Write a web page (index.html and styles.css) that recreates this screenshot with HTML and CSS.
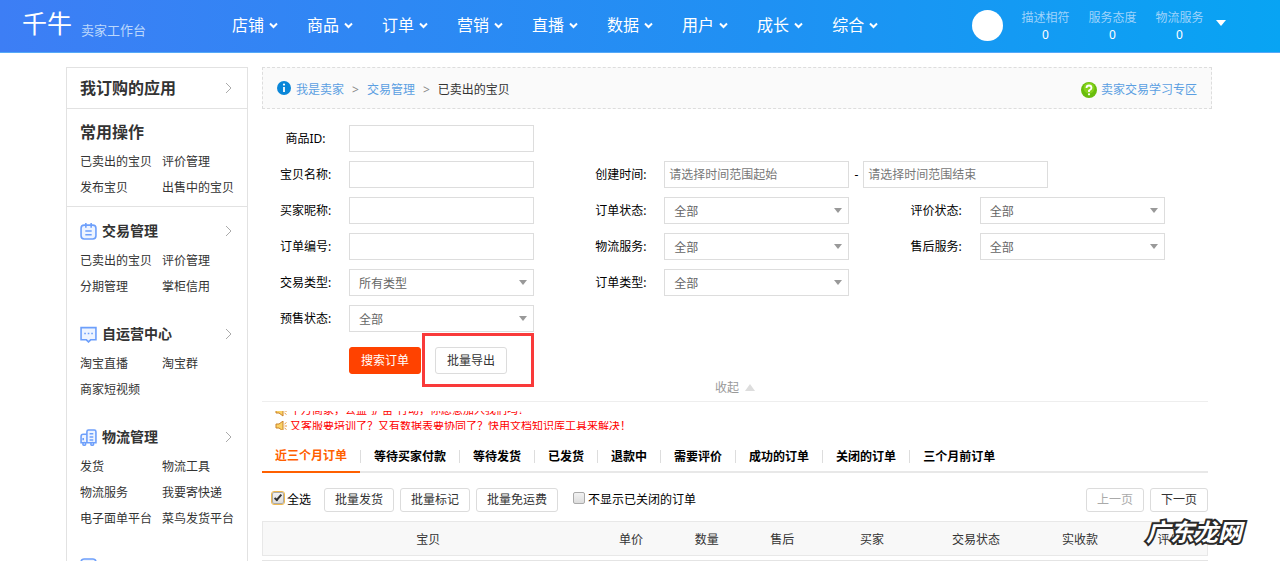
FILE: index.html
```html
<!DOCTYPE html>
<html lang="zh-CN">
<head>
  <meta charset="UTF-8">
  <title>已卖出的宝贝</title>
  <link rel="stylesheet" href="styles.css">
</head>
<body>
  <header class="header">
    <div class="logo">
      <span class="logo-name">千牛</span>
      <span class="logo-sub">卖家工作台</span>
    </div>
    <nav class="nav">
      <a href="#">店铺<svg class="chevron" viewBox="0 0 9 7"><path d="M1 1.500l3.500 3.500L8 1.500"/></svg></a>
      <a href="#">商品<svg class="chevron" viewBox="0 0 9 7"><path d="M1 1.500l3.500 3.500L8 1.500"/></svg></a>
      <a href="#">订单<svg class="chevron" viewBox="0 0 9 7"><path d="M1 1.500l3.500 3.500L8 1.500"/></svg></a>
      <a href="#">营销<svg class="chevron" viewBox="0 0 9 7"><path d="M1 1.500l3.500 3.500L8 1.500"/></svg></a>
      <a href="#">直播<svg class="chevron" viewBox="0 0 9 7"><path d="M1 1.500l3.500 3.500L8 1.500"/></svg></a>
      <a href="#">数据<svg class="chevron" viewBox="0 0 9 7"><path d="M1 1.500l3.500 3.500L8 1.500"/></svg></a>
      <a href="#">用户<svg class="chevron" viewBox="0 0 9 7"><path d="M1 1.500l3.500 3.500L8 1.500"/></svg></a>
      <a href="#">成长<svg class="chevron" viewBox="0 0 9 7"><path d="M1 1.500l3.500 3.500L8 1.500"/></svg></a>
      <a href="#">综合<svg class="chevron" viewBox="0 0 9 7"><path d="M1 1.500l3.500 3.500L8 1.500"/></svg></a>
    </nav>
    <div class="account">
      <span class="avatar"></span>
      <dl class="scores">
        <div><dt>描述相符</dt><dd>0</dd></div>
        <div><dt>服务态度</dt><dd>0</dd></div>
        <div><dt>物流服务</dt><dd>0</dd></div>
      </dl>
      <span class="account-arrow"></span>
    </div>
  </header>

  <div class="page">
    <aside class="sidebar">
      <a class="side-apps" href="#">我订购的应用<svg class="arrow" viewBox="0 0 7 12"><path d="M1 1l5 5-5 5"/></svg></a>
      <section class="side-common">
        <h2 class="side-title">常用操作</h2>
        <div class="side-links">
          <a href="#">已卖出的宝贝</a><a href="#">评价管理</a>
          <a href="#">发布宝贝</a><a href="#">出售中的宝贝</a>
        </div>
      </section>
      <div class="side-modules">
        <section class="module">
          <h3 class="module-title">
            <svg class="module-icon" viewBox="0 0 16 16"><rect x="1" y="2" width="14" height="13" rx="3"/><path d="M5.500 0v4.500M10.500 0v4.500M5 7.500h6M5 11h6"/></svg>
            交易管理<svg class="arrow" viewBox="0 0 7 12"><path d="M1 1l5 5-5 5"/></svg>
          </h3>
          <div class="side-links">
            <a href="#">已卖出的宝贝</a><a href="#">评价管理</a>
            <a href="#">分期管理</a><a href="#">掌柜信用</a>
          </div>
        </section>
        <section class="module">
          <h3 class="module-title">
            <svg class="module-icon" viewBox="0 0 16 16"><path d="M1 1.500h14v11.500H10l-2 2-2-2H1z"/><path d="M4 7h1.500M7.300 7h1.500M10.600 7h1.500"/></svg>
            自运营中心<svg class="arrow" viewBox="0 0 7 12"><path d="M1 1l5 5-5 5"/></svg>
          </h3>
          <div class="side-links">
            <a href="#">淘宝直播</a><a href="#">淘宝群</a>
            <a href="#">商家短视频</a>
          </div>
        </section>
        <section class="module">
          <h3 class="module-title">
            <svg class="module-icon" viewBox="0 0 16 16"><path d="M6.500 13V2.500q0-1.500 1.500-1.500h5.500q1.500 0 1.500 1.500V13H6.500zM6.500 5H3Q1 5 1 7v6h5.500M9 4.500h3.500M9 7.500h3.500M9 10.300h3.500M3 8.500v2"/><circle cx="4" cy="14" r="1.300"/><circle cx="11.500" cy="14" r="1.300"/></svg>
            物流管理<svg class="arrow" viewBox="0 0 7 12"><path d="M1 1l5 5-5 5"/></svg>
          </h3>
          <div class="side-links">
            <a href="#">发货</a><a href="#">物流工具</a>
            <a href="#">物流服务</a><a href="#">我要寄快递</a>
            <a href="#">电子面单平台</a><a href="#">菜鸟发货平台</a>
          </div>
        </section>
        <section class="module">
          <h3 class="module-title">
            <svg class="module-icon" viewBox="0 0 16 16"><rect x="1" y="1" width="14" height="13" rx="3"/></svg>
          </h3>
        </section>
      </div>
    </aside>

    <main class="main">
      <div class="crumb">
        <svg class="crumb-info" viewBox="0 0 14 14"><circle cx="7" cy="7" r="7" fill="#0a86d8"/><circle cx="7" cy="3.600" r="1.100" fill="#fff"/><path d="M7 6v5" stroke="#fff" stroke-width="1.800"/></svg>
        <a href="#">我是卖家</a>
        <span class="crumb-sep">&gt;</span>
        <a href="#">交易管理</a>
        <span class="crumb-sep">&gt;</span>
        <span>已卖出的宝贝</span>
        <a class="crumb-help" href="#"><svg class="crumb-question" viewBox="0 0 16 16"><circle cx="8" cy="8" r="8" fill="#69bd0c"/><circle cx="8" cy="6" r="5.500" fill="#86d21c"/><path d="M5.500 6Q5.500 3.500 8 3.500T10.500 6Q10.500 7.300 8 8.500V10" fill="none" stroke="#fff" stroke-width="1.800"/><circle cx="8" cy="12.300" r="1.100" fill="#fff"/></svg>卖家交易学习专区</a>
      </div>

      <form class="search">
        <div class="fields">
          <div class="field first"><label for="itemId">商品ID:</label><input type="text" id="itemId"></div>

          <div class="field first"><label for="itemName">宝贝名称:</label><input type="text" id="itemName"></div>
          <div class="field range">
            <label for="dateFrom">创建时间:</label><input type="text" id="dateFrom" placeholder="请选择时间范围起始">
            <span class="dash">-</span><input type="text" id="dateTo" aria-label="结束时间" placeholder="请选择时间范围结束">
          </div>

          <div class="field first"><label for="buyer">买家昵称:</label><input type="text" id="buyer"></div>
          <div class="field"><label for="orderStatus">订单状态:</label><span class="select"><select id="orderStatus"><option>全部</option></select></span></div>
          <div class="field"><label for="rateStatus">评价状态:</label><span class="select"><select id="rateStatus"><option>全部</option></select></span></div>

          <div class="field first"><label for="orderNo">订单编号:</label><input type="text" id="orderNo"></div>
          <div class="field"><label for="logistics">物流服务:</label><span class="select"><select id="logistics"><option>全部</option></select></span></div>
          <div class="field"><label for="afterSale">售后服务:</label><span class="select"><select id="afterSale"><option>全部</option></select></span></div>

          <div class="field first"><label for="tradeType">交易类型:</label><span class="select"><select id="tradeType"><option>所有类型</option></select></span></div>
          <div class="field"><label for="orderType">订单类型:</label><span class="select"><select id="orderType"><option>全部</option></select></span></div>

          <div class="field first"><label for="presale">预售状态:</label><span class="select"><select id="presale"><option>全部</option></select></span></div>
        </div>
        <div class="actions">
          <button type="button" class="btn-search">搜索订单</button>
          <span class="export"><button type="button" class="btn-export">批量导出</button></span>
        </div>
        <a class="collapse" href="#">收起<span class="collapse-arrow"></span></a>
      </form>

      <div class="notices">
        <p class="notice notice-top"><svg class="horn" viewBox="0 0 12 12"><path d="M1 4h3l4-3v10L4 8H1z" fill="#fbd265" stroke="#c9822b"/><path d="M9.500 4l2-1.500M9.500 6H12M9.500 8l2 1.500" stroke="#e79a3c"/></svg>千万商家，公益“护苗”行动，你愿意加入我们吗？</p>
        <p class="notice notice-bottom"><svg class="horn" viewBox="0 0 12 12"><path d="M1 4h3l4-3v10L4 8H1z" fill="#fbd265" stroke="#c9822b"/><path d="M9.500 4l2-1.500M9.500 6H12M9.500 8l2 1.500" stroke="#e79a3c"/></svg>又客服要培训了？又有数据表要协同了？快用文档知识库工具来解决！</p>
      </div>

      <nav class="tabs">
        <a class="active" href="#">近三个月订单</a>
        <a href="#">等待买家付款</a>
        <a href="#">等待发货</a>
        <a href="#">已发货</a>
        <a href="#">退款中</a>
        <a href="#">需要评价</a>
        <a href="#">成功的订单</a>
        <a href="#">关闭的订单</a>
        <a href="#">三个月前订单</a>
      </nav>

      <div class="toolbar">
        <label class="check check-all"><input type="checkbox" checked>全选</label>
        <button type="button">批量发货</button>
        <button type="button">批量标记</button>
        <button type="button">批量免运费</button>
        <label class="check check-closed"><input type="checkbox">不显示已关闭的订单</label>
        <div class="pager">
          <button type="button" disabled>上一页</button>
          <button type="button">下一页</button>
        </div>
      </div>

      <table class="orders">
        <colgroup>
          <col class="col-item"><col class="col-s"><col class="col-s"><col class="col-s">
          <col class="col-m"><col class="col-m"><col class="col-m"><col class="col-s">
        </colgroup>
        <thead>
          <tr>
            <th>宝贝</th>
            <th>单价</th>
            <th>数量</th>
            <th>售后</th>
            <th>买家</th>
            <th>交易状态</th>
            <th>实收款</th>
            <th>评价</th>
          </tr>
        </thead>
      </table>
      <div class="order-list"></div>
    </main>
  </div>

  <div class="watermark">广东龙网</div>
</body>
</html>
```
FILE: styles.css
```css
* {
  box-sizing: border-box;
}
body {
  position: relative;
  display: flex;
  flex-direction: column;
  height: 100vh;
  margin: 0;
  overflow: hidden;
  font-family: "Noto Sans", "Noto Sans CJK SC", sans-serif;
  font-size: 12px;
  line-height: 16px;
  color: #333;
  background: #fff;
}
a {
  color: inherit;
  text-decoration: none;
}
h2, h3, p, dl, dd {
  margin: 0;
}
button, input, select {
  font: inherit;
}
svg {
  flex: none;
}

/* header */
.header {
  display: flex;
  flex: none;
  align-items: center;
  height: 53px;
  padding: 0 54px 2px 22px;
  color: #fff;
  background: linear-gradient(90deg, #3d7ef5, #1f91f3 60%, #08a4f3);
  border-bottom: 1px solid #55a9f8;
}
.logo {
  display: flex;
  align-items: flex-end;
  gap: 9px;
  width: 210px;
  padding-bottom: 4px;
}
.logo-name {
  font-size: 25px;
  line-height: 32px;
}
.logo-sub {
  font-size: 13px;
  line-height: 18px;
  color: #bcd8fc;
}
.nav {
  display: flex;
  gap: 29px;
  font-size: 16px;
  line-height: 24px;
}
.nav a {
  display: flex;
  align-items: center;
  gap: 5px;
}
.chevron {
  width: 9px;
  height: 7px;
  fill: none;
  stroke: #fff;
  stroke-width: 2;
}
.account {
  display: flex;
  align-items: center;
  margin-left: auto;
}
.avatar {
  width: 31px;
  height: 31px;
  margin-right: 9px;
  border-radius: 50%;
  background: #fff;
}
.scores {
  display: flex;
  padding-top: 2px;
  line-height: 17px;
  text-align: center;
}
.scores div {
  width: 67px;
}
.scores dt {
  color: #9fd3fb;
}
.account-arrow {
  margin: 0 0 4px 3px;
  border: 5px solid transparent;
  border-top: 6px solid #fff;
  border-bottom: 0;
}

/* columns */
.page {
  display: flex;
  flex: 1;
  gap: 14px;
  min-height: 0;
  padding: 14px 68px 0 66px;
}

/* sidebar */
.sidebar {
  flex: none;
  width: 182px;
  border: 1px solid #e2e2e2;
  border-bottom: 0;
  overflow: hidden;
}
.arrow {
  width: 7px;
  height: 12px;
  margin-left: auto;
  fill: none;
  stroke: #aaa;
}
.side-apps {
  display: flex;
  align-items: center;
  height: 41px;
  padding: 0 15px 0 13px;
  font-size: 16px;
  font-weight: bold;
  border-bottom: 1px solid #e2e2e2;
}
.side-common {
  padding: 7px 0 5px 13px;
  border-bottom: 1px solid #e2e2e2;
}
.side-title {
  font-size: 16px;
  line-height: 32px;
}
.side-links {
  display: grid;
  grid-template-columns: 82px 1fr;
  padding-top: 1px;
  line-height: 26px;
}
.side-modules {
  padding: 8px 0 0 13px;
}
.module {
  margin-bottom: 18px;
}
.module-title {
  display: flex;
  align-items: center;
  gap: 5px;
  height: 32px;
  padding-right: 15px;
  font-size: 14px;
}
.module-icon {
  width: 17px;
  height: 17px;
  fill: #eef4ff;
  stroke: #6d9ffb;
  stroke-width: 1.5;
}

/* breadcrumb */
.main {
  flex: 1;
  min-width: 0;
}
.crumb {
  display: flex;
  align-items: center;
  gap: 8px;
  height: 42px;
  padding: 4px 14px 0;
  background: #fafafa;
  border: 1px dashed #ddd;
}
.crumb a {
  color: #5b9fe2;
}
.crumb-info {
  width: 14px;
  height: 14px;
  margin: 0 -3px 4px 0;
}
.crumb-sep {
  color: #888;
}
.crumb-help {
  display: flex;
  gap: 4px;
  margin-left: auto;
}
.crumb-question {
  width: 16px;
  height: 16px;
}

/* search form */
.search {
  margin-right: 4px;
  padding-top: 16px;
  color: #000;
  border-bottom: 1px solid #eee;
}
.fields {
  display: grid;
  grid-template-columns: repeat(3, 1fr);
  row-gap: 9px;
}
.first {
  grid-column-start: 1;
}
.range {
  grid-column: span 2;
}
.field {
  display: flex;
  align-items: center;
  height: 27px;
}
.field label {
  width: 87px;
  text-align: center;
}
.field input, .select {
  width: 185px;
  height: 27px;
}
.field input, .select select {
  padding: 0 4px;
  color: #555;
  background: #fff;
  border: 1px solid #ddd;
  border-radius: 0;
}
.field input::placeholder {
  color: #777;
}
.dash {
  width: 14px;
  text-align: center;
}
.select {
  position: relative;
}
.select select {
  width: 100%;
  height: 100%;
  padding: 2px 9px 0;
  appearance: none;
  color: #666;
}
.select::after {
  content: "";
  position: absolute;
  top: 11px;
  right: 7px;
  border: 4px solid transparent;
  border-top: 5px solid #999;
  border-bottom: 0;
  pointer-events: none;
}
.actions {
  display: flex;
  gap: 14px;
  margin: 15px 0 0 87px;
}
.actions button {
  height: 27px;
  padding: 0 11px;
  border-radius: 3px;
}
.btn-search {
  color: #fff;
  background: #ff4200;
  border: 1px solid #ff4200;
}
.btn-export {
  color: #333;
  background: #fff;
  border: 1px solid #dcdcdc;
}
.export {
  position: relative;
}
/* red frame round the export button */
.export::after {
  content: "";
  position: absolute;
  top: -14px;
  left: -13px;
  width: 106px;
  height: 48px;
  border: 3px solid #f93a3a;
  pointer-events: none;
}
.collapse {
  display: flex;
  align-items: center;
  justify-content: center;
  gap: 6px;
  height: 27px;
  color: #999;
}
.collapse-arrow {
  border: 5px solid transparent;
  border-top: 0;
  border-bottom: 7px solid #ddd;
}

/* scrolling notices, two lines caught half way */
.notices {
  height: 38px;
  padding: 9px 0 0 13px;
  font-size: 11px;
  color: #f00;
}
.notice {
  display: flex;
  align-items: center;
  gap: 3px;
  overflow: hidden;
}
.notice-top {
  align-items: flex-end;
  height: 6px;
  margin-bottom: 4px;
  line-height: 14px;
}
.notice-bottom {
  height: 9px;
}
.horn {
  width: 12px;
  height: 12px;
  fill: none;
}

/* tabs */
.tabs {
  display: flex;
  height: 33px;
  margin-right: 4px;
  border-bottom: 2px solid #e8e8e8;
  font-weight: bold;
  color: #000;
}
.tabs a {
  display: flex;
  align-items: center;
  height: 33px;
  padding-right: 13px;
}
.tabs a + a::before {
  content: "";
  width: 1px;
  height: 13px;
  margin-right: 13px;
  background: #ddd;
}
.tabs .active {
  padding-left: 13px;
  color: #ff6000;
  border-bottom: 2px solid #ff6000;
}

/* toolbar */
.toolbar {
  display: flex;
  align-items: center;
  gap: 6px;
  margin: 0 4px 0 9px;
  padding: 15px 0 9px;
}
.toolbar button {
  height: 24px;
  padding: 0 10px;
  color: #333;
  background: #fff;
  border: 1px solid #dcdcdc;
  border-radius: 3px;
}
.toolbar button:disabled {
  color: #aaa;
}
.check {
  display: flex;
  align-items: center;
  gap: 3px;
  color: #000;
}
.check-all {
  width: 47px;
}
.check-closed {
  margin-left: 9px;
}
.check input {
  position: relative;
  width: 12px;
  height: 12px;
  margin: 0 0 4px;
  appearance: none;
  background: linear-gradient(#f2f2f2, #ddd);
  border: 1px solid #aaa;
  border-radius: 2px;
}
.check input:checked {
  margin-left: 1px;
  outline: 1px solid #eeb94f;
}
.check input:checked::after {
  content: "";
  position: absolute;
  top: 0;
  left: 3px;
  width: 2px;
  height: 6px;
  border: solid #333;
  border-width: 0 2px 2px 0;
  transform: rotate(40deg);
}
.pager {
  display: flex;
  gap: 6px;
  margin-left: auto;
}

/* order table */
.orders {
  width: calc(100% - 4px);
  table-layout: fixed;
  border-collapse: collapse;
  background: #f8f8f8;
  border: 1px solid #e8e8e8;
}
.col-item {
  width: 35%;
}
.col-s {
  width: 8%;
}
.col-m {
  width: 11%;
}
.orders th {
  height: 34px;
  padding: 2px 0 0;
  font-weight: normal;
}
.order-list {
  margin: 4px 4px 0 0;
  border-top: 1px solid #e4e4e4;
}

.watermark {
  position: absolute;
  right: 38px;
  bottom: 14px;
  font-size: 24px;
  font-style: italic;
  font-weight: bold;
  line-height: 30px;
  color: #fff;
  -webkit-text-stroke: 4px #2b2b2b;
  paint-order: stroke fill;
}
```
